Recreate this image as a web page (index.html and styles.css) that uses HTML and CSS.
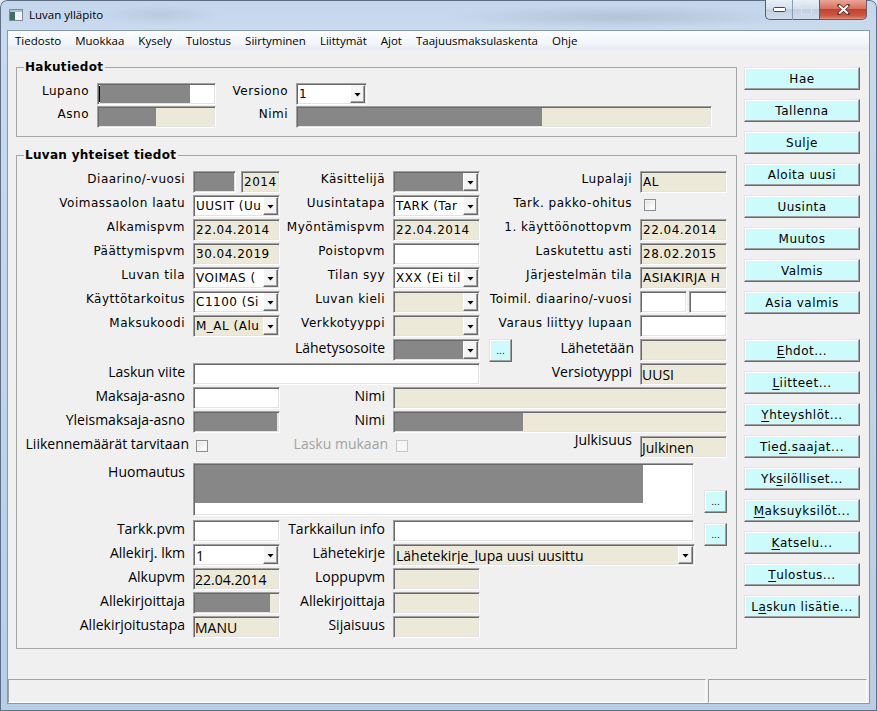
FILE: index.html
```html
<!DOCTYPE html>
<html lang="fi">
<head>
<meta charset="utf-8">
<title>Luvan ylläpito</title>
<link rel="stylesheet" href="styles.css">
</head>
<body>
<div class="window">
  <div class="titlebar">
    <svg class="app-icon" width="14" height="12" viewBox="0 0 14 12">
      <rect x="0.5" y="0.5" width="13" height="11" fill="#eef3f8" stroke="#7d8a96"/>
      <rect x="1" y="1" width="12" height="2" fill="#a9c1d9"/>
      <rect x="1" y="3" width="5" height="8" fill="#3f6f62"/>
    </svg>
    <span class="title">Luvan ylläpito</span>
    <div class="caption">
      <span class="cap min">
        <svg width="13" height="5" viewBox="0 0 13 5"><rect x="0.5" y="0.5" width="12" height="4" rx="1" fill="#fff" stroke="#3b4a5c"/></svg>
      </span>
      <span class="cap max">
        <svg width="11" height="10" viewBox="0 0 11 10"><rect x="0.5" y="0.5" width="10" height="9" fill="none" stroke="#d8e1eb"/><rect x="1" y="1" width="9" height="2" fill="#d8e1eb"/></svg>
      </span>
      <span class="cap close">
        <svg width="13" height="11" viewBox="0 0 13 11"><path d="M2 1.5 L11 9.5 M11 1.5 L2 9.5" stroke="#5a2b24" stroke-width="3.6" stroke-linecap="round"/><path d="M2 1.5 L11 9.5 M11 1.5 L2 9.5" stroke="#fff" stroke-width="2"/></svg>
      </span>
    </div>
  </div>

  <div class="client">
    <nav class="menubar">
      <span>Tiedosto</span><span>Muokkaa</span><span>Kysely</span><span>Tulostus</span><span>Siirtyminen</span><span>Liittymät</span><span>Ajot</span><span>Taajuusmaksulaskenta</span><span>Ohje</span>
    </nav>

    <div class="workarea">
      <div class="forms">
        <fieldset class="group">
          <legend>Hakutiedot</legend>
          <div class="search-grid">
            <span class="lbl v">Lupano</span>
            <div class="field"><span class="caret"></span><span class="redact" style="width:90px"></span></div>
            <span class="lbl v">Versiono</span>
            <div class="combo w71"><span class="ctext v">1</span><span class="drop"></span></div>
            <span class="lbl v">Asno</span>
            <div class="field ro"><span class="redact" style="width:57px"></span></div>
            <span class="lbl v">Nimi</span>
            <div class="field ro"><span class="redact" style="width:244px"></span></div>
          </div>
        </fieldset>

        <fieldset class="group">
          <legend>Luvan yhteiset tiedot</legend>
          <div class="main-grid">
            <!-- row 1 -->
            <span class="lbl v c1">Diaarino/-vuosi</span>
            <div class="pair">
              <div class="field ro w43"><span class="redact full"></span></div>
              <div class="field ro grow v">2014</div>
            </div>
            <span class="lbl v">Käsittelijä</span>
            <div class="combo"><span class="ctext gray"></span><span class="drop"></span></div>
            <span class="lbl v">Lupalaji</span>
            <div class="field ro v">AL</div>

            <!-- row 2 -->
            <span class="lbl v c1">Voimassaolon laatu</span>
            <div class="combo"><span class="ctext v">UUSIT (Uu</span><span class="drop"></span></div>
            <span class="lbl v">Uusintatapa</span>
            <div class="combo"><span class="ctext v">TARK (Tar</span><span class="drop"></span></div>
            <span class="lbl v">Tark. pakko-ohitus</span>
            <div class="cell"><span class="check ck-top"></span></div>

            <!-- row 3 -->
            <span class="lbl v c1">Alkamispvm</span>
            <div class="field ro v">22.04.2014</div>
            <span class="lbl v">Myöntämispvm</span>
            <div class="field ro v">22.04.2014</div>
            <span class="lbl v">1. käyttöönottopvm</span>
            <div class="field ro v">22.04.2014</div>

            <!-- row 4 -->
            <span class="lbl v c1">Päättymispvm</span>
            <div class="field ro v">30.04.2019</div>
            <span class="lbl v">Poistopvm</span>
            <div class="field"></div>
            <span class="lbl v">Laskutettu asti</span>
            <div class="field ro v">28.02.2015</div>

            <!-- row 5 -->
            <span class="lbl v c1">Luvan tila</span>
            <div class="combo"><span class="ctext v">VOIMAS (</span><span class="drop"></span></div>
            <span class="lbl v">Tilan syy</span>
            <div class="combo"><span class="ctext v">XXX (Ei til</span><span class="drop"></span></div>
            <span class="lbl v">Järjestelmän tila</span>
            <div class="field ro v">ASIAKIRJA H</div>

            <!-- row 6 -->
            <span class="lbl v c1">Käyttötarkoitus</span>
            <div class="combo"><span class="ctext v">C1100 (Si</span><span class="drop"></span></div>
            <span class="lbl v">Luvan kieli</span>
            <div class="combo ro"><span class="ctext"></span><span class="drop"></span></div>
            <span class="lbl v">Toimil. diaarino/-vuosi</span>
            <div class="pair tight">
              <div class="field w47"></div>
              <div class="field grow"></div>
            </div>

            <!-- row 7 -->
            <span class="lbl v c1">Maksukoodi</span>
            <div class="combo ro"><span class="ctext v">M_AL (Alu</span><span class="drop"></span></div>
            <span class="lbl v">Verkkotyyppi</span>
            <div class="combo ro"><span class="ctext"></span><span class="drop"></span></div>
            <span class="lbl v">Varaus liittyy lupaan</span>
            <div class="field"></div>

            <!-- row 8 -->
            <span class="lbl s col3">Lähetysosoite</span>
            <div class="combo"><span class="ctext gray"></span><span class="drop"></span></div>
            <div class="cell split">
              <span class="dots">...</span>
              <span class="lbl s">Lähetetään</span>
            </div>
            <div class="field ro"></div>

            <!-- row 9 -->
            <span class="lbl s c1">Laskun viite</span>
            <div class="field span3"></div>
            <span class="lbl s">Versiotyyppi</span>
            <div class="field ro s">UUSI</div>

            <!-- row 10 -->
            <span class="lbl s c1">Maksaja-asno</span>
            <div class="field"></div>
            <span class="lbl s">Nimi</span>
            <div class="field ro span3"></div>

            <!-- row 11 -->
            <span class="lbl s c1">Yleismaksaja-asno</span>
            <div class="field ro"><span class="redact" style="width:82px"></span></div>
            <span class="lbl s">Nimi</span>
            <div class="field ro span3"><span class="redact" style="width:128px"></span></div>

            <!-- row 12 -->
            <span class="lbl s near c1">Liikennemäärät tarvitaan</span>
            <div class="cell"><span class="check ck-mid"></span></div>
            <span class="lbl s near disabled">Lasku mukaan</span>
            <div class="cell"><span class="check ck-mid off"></span></div>
            <span class="lbl s up">Julkisuus</span>
            <div class="field ro s nudge">Julkinen</div>

            <!-- row 13 -->
            <span class="lbl s c1">Huomautus</span>
            <div class="cell span5 withbtn">
              <div class="field memo"><span class="redact memo-block"></span></div>
              <span class="dots low">...</span>
            </div>

            <!-- row 14 -->
            <span class="lbl s c1">Tarkk.pvm</span>
            <div class="field"></div>
            <span class="lbl s">Tarkkailun info</span>
            <div class="cell span3 withbtn">
              <div class="field grow"></div>
              <span class="dots drop3">...</span>
            </div>

            <!-- row 15 -->
            <span class="lbl s c1">Allekirj. lkm</span>
            <div class="combo"><span class="ctext s">1</span><span class="drop"></span></div>
            <span class="lbl s">Lähetekirje</span>
            <div class="combo ro span3 short"><span class="ctext s">Lähetekirje_lupa uusi uusittu</span><span class="drop"></span></div>

            <!-- row 16 -->
            <span class="lbl s c1">Alkupvm</span>
            <div class="field ro s">22.04.2014</div>
            <span class="lbl s">Loppupvm</span>
            <div class="field ro"></div>

            <!-- row 17 -->
            <span class="lbl s c1">Allekirjoittaja</span>
            <div class="field ro"><span class="redact" style="width:75px"></span></div>
            <span class="lbl s">Allekirjoittaja</span>
            <div class="field ro"></div>

            <!-- row 18 -->
            <span class="lbl s c1">Allekirjoitustapa</span>
            <div class="field ro s">MANU</div>
            <span class="lbl s">Sijaisuus</span>
            <div class="field ro"></div>
          </div>
        </fieldset>
      </div>

      <div class="buttons">
        <span class="btn">Hae</span>
        <span class="btn">Tallenna</span>
        <span class="btn">Sulje</span>
        <span class="btn">Aloita uusi</span>
        <span class="btn">Uusinta</span>
        <span class="btn">Muutos</span>
        <span class="btn">Valmis</span>
        <span class="btn">Asia valmis</span>
        <span class="btn sep"><u>E</u>hdot...</span>
        <span class="btn"><u>L</u>iitteet...</span>
        <span class="btn"><u>Y</u>hteyshlöt...</span>
        <span class="btn">Tie<u>d</u>.saajat...</span>
        <span class="btn">Yk<u>s</u>ilölliset...</span>
        <span class="btn"><u>M</u>aksuyksilöt...</span>
        <span class="btn"><u>K</u>atselu...</span>
        <span class="btn"><u>T</u>ulostus...</span>
        <span class="btn">L<u>a</u>skun lisätie...</span>
      </div>
    </div>

    <div class="statusbar">
      <div class="panel main"></div>
      <div class="panel side"></div>
    </div>
  </div>
</div>
</body>
</html>
```

FILE: styles.css
```css
* { box-sizing: border-box; }

html, body {
  margin: 0;
  padding: 0;
}

body {
  width: 877px;
  height: 711px;
  overflow: hidden;
  background: #e3eaf2;
  font-family: "DejaVu Sans", Verdana, sans-serif;
  font-size: 12px;
  color: #000;
}

/* ---------- window frame ---------- */
.window {
  width: 877px;
  height: 711px;
  display: flex;
  flex-direction: column;
  border-radius: 7px 7px 0 0;
  background:
    radial-gradient(ellipse 170px 12px at 620px 17px, rgba(70, 85, 100, 0.16), transparent),
    radial-gradient(ellipse 60px 10px at 160px 15px, rgba(70, 85, 100, 0.10), transparent),
    linear-gradient(180deg, #c3d6ec 0%, #c9daee 30px, #b8cee7 100%);
  box-shadow: inset 0 0 0 1px #5f7087;
}

.titlebar {
  height: 30px;
  flex: none;
  display: flex;
  align-items: flex-start;
  padding-left: 9px;
}

.app-icon {
  margin-top: 9px;
  flex: none;
}

.title {
  font-family: "Open Sans", sans-serif;
  font-size: 11.5px;
  line-height: 16px;
  margin-top: 7px;
  margin-left: 6px;
  color: #000;
}

.caption {
  margin-left: auto;
  margin-right: 10px;
  display: flex;
}

.cap {
  height: 20px;
  display: flex;
  align-items: center;
  justify-content: center;
  border: 1px solid #52627a;
  border-top: none;
}

.cap.min {
  width: 28px;
  border-radius: 0 0 0 5px;
  border-right: 1px solid #8b9bb0;
  background: linear-gradient(180deg, #e9eff6 0%, #d6e1ee 45%, #c1d0e2 50%, #d0dcea 100%);
}

.cap.max {
  width: 26px;
  border-left: none;
  border-right: none;
  background: linear-gradient(180deg, #e9eff6 0%, #d6e1ee 45%, #c1d0e2 50%, #d0dcea 100%);
}

.cap.close {
  width: 48px;
  border-radius: 0 0 5px 0;
  background: linear-gradient(180deg, #e8a697 0%, #d9705f 45%, #c4412d 50%, #cf5a45 85%, #e39580 100%);
}

/* ---------- client ---------- */
.client {
  flex: 1;
  margin: 0 7px 7px;
  border: 1px solid #8498b2;
  background: #f0f0f0;
  display: flex;
  flex-direction: column;
  min-height: 0;
}

.menubar {
  height: 19px;
  flex: none;
  display: flex;
  align-items: center;
  background: linear-gradient(180deg, #fcfdfe 0%, #f3f6fa 60%, #e6ebf3 100%);
  font-family: "Open Sans", sans-serif;
  font-size: 11.5px;
}

.menubar span {
  padding: 0 7px;
  line-height: 19px;
}

.workarea {
  flex: 1;
  display: flex;
  padding-left: 8px;
  min-height: 0;
}

.forms {
  width: 721px;
  flex: none;
  padding-top: 10px;
  display: flex;
  flex-direction: column;
  gap: 11px;
}

/* ---------- group boxes ---------- */
fieldset.group {
  margin: 0;
  padding: 9px 0 8px;
  border: 1px solid #a5a5a5;
  min-width: 0;
}

fieldset.group legend {
  font-family: "DejaVu Sans", Verdana, sans-serif;
  font-weight: bold;
  font-size: 12px;
  line-height: 14px;
  letter-spacing: 0.3px;
  padding: 0 2px 0 1px;
  margin-left: 7px;
}

.search-grid {
  display: grid;
  grid-template-columns: 80px 119px 80px 416px;
  grid-template-rows: 22px 22px;
  row-gap: 1px;
}

.main-grid {
  display: grid;
  grid-template-columns: 176px 87px 113px 87px 160px 87px;
  grid-template-rows: repeat(11, 24px) 28px 57px repeat(5, 24px);
}

/* ---------- labels ---------- */
.lbl {
  text-align: right;
  padding-right: 8px;
  white-space: nowrap;
}

.c1 { grid-column: 1; }
.col3 { grid-column: 3; }

.v {
  font-family: "DejaVu Sans", Verdana, sans-serif;
  font-size: 12px;
  letter-spacing: 0.5px;
  line-height: 14px;
}

.lbl.v { padding-top: 1px; }

.s {
  font-family: "Open Sans", sans-serif;
  font-size: 14px;
  line-height: 18px;
}

.lbl.near { padding-right: 4px; }
.lbl.up { margin-top: -4px; }
.lbl.disabled { color: #a3a3a3; padding-right: 5px; }

/* ---------- fields ---------- */
.field {
  height: 22px;
  border: 1px solid;
  border-color: #a0a0a0 #fff #fff #a0a0a0;
  box-shadow: inset 1px 1px 0 #696969, inset -1px -1px 0 #e3e3e3;
  background: #fff;
  padding: 1px 1px 1px 2px;
  display: flex;
  overflow: hidden;
  white-space: nowrap;
}

.field.v { line-height: 18px; }
.field.s { line-height: 19px; padding-left: 1px; }

.field.ro { background: #ece9d8; }

.field.nudge { margin-top: 1px; }

.redact {
  display: block;
  height: 100%;
  margin-left: -1px;
  background: #878787;
  flex: none;
}

.redact.full { width: calc(100% + 1px); }

.caret {
  width: 1px;
  height: 16px;
  margin: 1px 1px 0 -1px;
  background: #000;
  flex: none;
}

.pair {
  display: flex;
  gap: 5px;
}

.pair.tight { gap: 2px; }

.w43 { width: 43px; flex: none; }
.w47 { width: 47px; flex: none; }
.w71 { width: 71px; }
.grow { flex: 1; min-width: 0; }

.span3 { grid-column: span 3; }
.span5 { grid-column: span 5; }

/* ---------- combo boxes ---------- */
.combo {
  height: 22px;
  border: 1px solid;
  border-color: #a0a0a0 #fff #fff #a0a0a0;
  box-shadow: inset 1px 1px 0 #696969, inset -1px -1px 0 #e3e3e3;
  background: #fff;
  padding: 1px;
  display: flex;
}

.combo.ro { background: #ece9d8; }
.combo.short { margin-right: 32px; }

.ctext {
  flex: 1;
  min-width: 0;
  overflow: hidden;
  white-space: nowrap;
  padding-left: 1px;
}

.ctext.v { line-height: 18px; }
.ctext.s { line-height: 19px; }
.ctext.gray { background: #878787; }

.drop {
  width: 15px;
  flex: none;
  background: #f4f4f4;
  border: 1px solid;
  border-color: #f4f4f4 #696969 #696969 #fff;
  box-shadow: inset -1px -1px 0 #a0a0a0;
  display: flex;
  align-items: center;
  justify-content: center;
}

.drop::after {
  content: "";
  width: 7px;
  height: 4px;
  margin-top: 1px;
  background: #000;
  clip-path: polygon(0 0, 100% 0, 50% 100%);
}

/* ---------- misc cells ---------- */
.cell { display: flex; align-items: flex-start; }

.check {
  display: block;
  width: 12px;
  height: 12px;
  border: 1px solid #8e8f8f;
  background: linear-gradient(135deg, #dedede 0%, #fbfbfb 70%, #fff 100%);
  box-shadow: inset 0 0 0 1px #f4f4f4;
}

.check.off {
  border-color: #c6c6c6;
  background: #f7f7f7;
}

.ck-top { margin: 4px 0 0 4px; }
.ck-mid { margin: 5px 0 0 3px; }

.split { justify-content: space-between; }
.split .lbl { padding-right: 6px; }

.withbtn { gap: 10px; }

.memo {
  flex: 1;
  height: 53px;
  align-items: flex-start;
}

.memo-block {
  width: 448px;
  height: 38px;
}

.dots {
  width: 23px;
  height: 23px;
  flex: none;
  margin-left: 9px;
  background: #cdfbfb;
  border: 1px solid;
  border-color: #e3e3e3 #696969 #696969 #e3e3e3;
  box-shadow: inset -1px -1px 0 #a0a0a0, inset 1px 1px 0 #fff;
  font-size: 9px;
  line-height: 9px;
  display: flex;
  align-items: flex-end;
  justify-content: center;
  padding-bottom: 5px;
}

.withbtn .dots { margin-left: 0; }
.dots.low { margin-top: 27px; }
.dots.drop3 { margin-top: 3px; }

/* ---------- right buttons ---------- */
.buttons {
  width: 116px;
  flex: none;
  margin-left: 7px;
  padding-top: 17px;
  display: flex;
  flex-direction: column;
  gap: 9px;
}

.btn {
  height: 23px;
  flex: none;
  background: #cdfbfb;
  border: 1px solid;
  border-color: #e3e3e3 #696969 #696969 #e3e3e3;
  box-shadow: inset -1px -1px 0 #a0a0a0, inset 1px 1px 0 #fff;
  font-family: "DejaVu Sans", Verdana, sans-serif;
  font-size: 12px;
  letter-spacing: 0.5px;
  display: flex;
  align-items: center;
  justify-content: center;
  white-space: nowrap;
}

.btn.sep { margin-top: 16px; }

.btn u { text-underline-offset: 2px; }

/* ---------- status bar ---------- */
.statusbar {
  height: 24px;
  flex: none;
  display: flex;
  gap: 2px;
  padding: 0 2px 0 0;
}

.panel {
  border: 1px solid;
  border-color: #a0a0a0 #fff #fff #a0a0a0;
}

.panel.main { flex: 1; }
.panel.side { width: 159px; }
```
